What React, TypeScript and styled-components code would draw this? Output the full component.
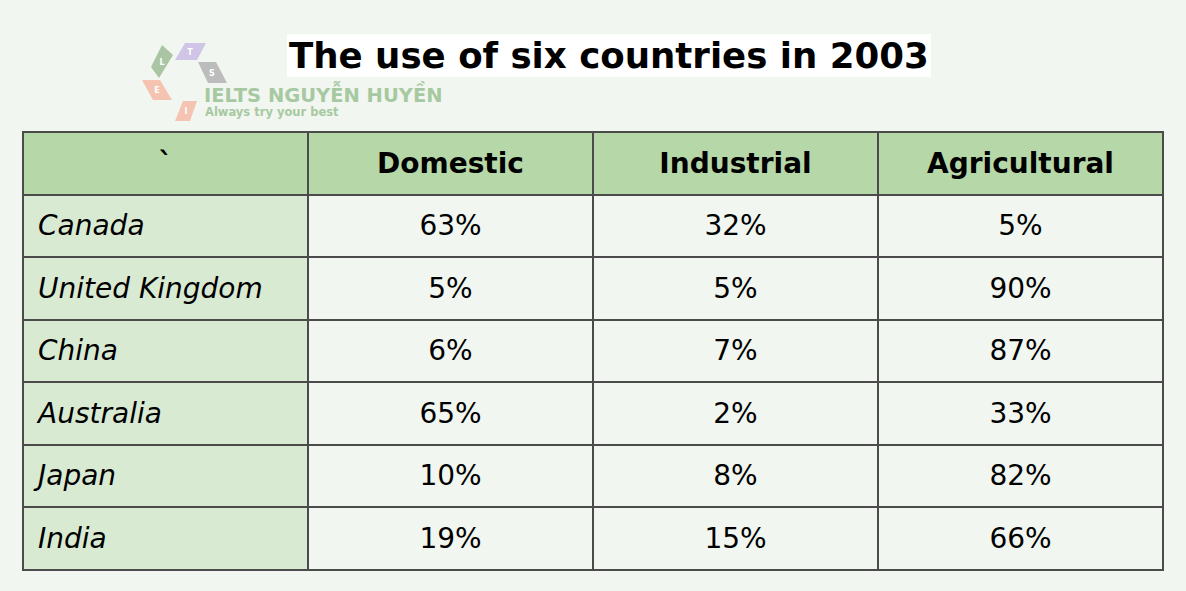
import React from "react";
import styled, { createGlobalStyle } from "styled-components";

const GlobalStyle = createGlobalStyle`
  html, body {
    margin: 0;
    padding: 0;
    background: #f2f6f0;
  }
  body {
    font-family: "DejaVu Sans", Verdana, sans-serif;
    color: #000;
  }
`;

const Page = styled.div`
  position: relative;
  width: 1186px;
  height: 591px;
  padding: 0 22px;
  box-sizing: border-box;
  overflow: hidden;
`;

const Header = styled.div`
  padding-top: 34px;
  padding-left: 265px;
  height: 131px;
  box-sizing: border-box;
`;

const Title = styled.h1`
  display: inline-block;
  margin: 0;
  padding: 0 2px;
  background: #ffffff;
  font-family: "DejaVu Sans", Verdana, sans-serif;
  font-weight: 700;
  font-size: 35.6px;
  line-height: 43px;
  white-space: nowrap;
`;

const Watermark = styled.div`
  position: absolute;
  left: 140px;
  top: 40px;
  pointer-events: none;
`;

const BrandText = styled.div`
  position: absolute;
  left: 64px;
  top: 45px;
  display: flex;
  flex-direction: column;
  color: #a7c9a2;
  font-family: "DejaVu Sans", Verdana, sans-serif;
  font-weight: 700;
  white-space: nowrap;
`;

const BrandName = styled.span`
  font-size: 19.5px;
  line-height: 21px;
`;

const Slogan = styled.span`
  font-size: 11.5px;
  line-height: 13px;
  margin-left: 1px;
`;

const Table = styled.table`
  width: 1142px;
  table-layout: fixed;
  border-collapse: collapse;
  border: 2px solid #4b4b4b;
`;

const HeadCell = styled.th`
  height: 60.5px;
  padding: 0;
  background: #b6d7a8;
  border: 2px solid #4b4b4b;
  font-size: 28px;
  font-weight: 700;
  text-align: center;
  vertical-align: middle;
`;

const Cell = styled.td<{ $label?: boolean }>`
  height: 60.5px;
  padding: ${(p) => (p.$label ? "0 0 0 14px" : "0")};
  background: ${(p) => (p.$label ? "#d9ead3" : "#f2f6f0")};
  border: 2px solid #4b4b4b;
  font-size: 28px;
  font-style: ${(p) => (p.$label ? "italic" : "normal")};
  text-align: ${(p) => (p.$label ? "left" : "center")};
  vertical-align: middle;
`;

const rows: [string, string, string, string][] = [
  ["Canada", "63%", "32%", "5%"],
  ["United Kingdom", "5%", "5%", "90%"],
  ["China", "6%", "7%", "87%"],
  ["Australia", "65%", "2%", "33%"],
  ["Japan", "10%", "8%", "82%"],
  ["India", "19%", "15%", "66%"],
];

function Logo() {
  const tiles = [
    { pts: "22,5 33,15 19,38 11,27", fill: "#a9c5a3", ch: "L", x: 22, y: 22 },
    { pts: "45,3 66,3 57,20 35,20", fill: "#d0c5e6", ch: "T", x: 50, y: 12 },
    { pts: "58,22 76,22 87,43 68,43", fill: "#bcbcbc", ch: "S", x: 72, y: 33 },
    { pts: "2,40 20,40 32,60 13,60", fill: "#f5c3b1", ch: "E", x: 17, y: 50 },
    { pts: "43,61 57,61 50,81 35,81", fill: "#f5c3b1", ch: "I", x: 46, y: 71 },
  ];
  return (
    <svg width="90" height="85" viewBox="0 0 90 85">
      {tiles.map((t) => (
        <g key={t.ch}>
          <polygon points={t.pts} fill={t.fill} />
          <text
            x={t.x}
            y={t.y + 3}
            fill="#ffffff"
            fontSize="8"
            fontWeight="700"
            fontFamily="DejaVu Sans, sans-serif"
            textAnchor="middle"
          >
            {t.ch}
          </text>
        </g>
      ))}
    </svg>
  );
}

export default function App() {
  return (
    <>
      <GlobalStyle />
      <Page>
        <Watermark>
          <Logo />
          <BrandText>
            <BrandName>IELTS NGUYỄN HUYỀN</BrandName>
            <Slogan>Always try your best</Slogan>
          </BrandText>
        </Watermark>
        <Header>
          <Title>The use of six countries in 2003</Title>
        </Header>
        <Table>
          <colgroup>
            <col style={{ width: "25%" }} />
            <col style={{ width: "25%" }} />
            <col style={{ width: "25%" }} />
            <col style={{ width: "25%" }} />
          </colgroup>
          <thead>
            <tr>
              <HeadCell>`</HeadCell>
              <HeadCell>Domestic</HeadCell>
              <HeadCell>Industrial</HeadCell>
              <HeadCell>Agricultural</HeadCell>
            </tr>
          </thead>
          <tbody>
            {rows.map((r) => (
              <tr key={r[0]}>
                <Cell $label>{r[0]}</Cell>
                <Cell>{r[1]}</Cell>
                <Cell>{r[2]}</Cell>
                <Cell>{r[3]}</Cell>
              </tr>
            ))}
          </tbody>
        </Table>
      </Page>
    </>
  );
}
